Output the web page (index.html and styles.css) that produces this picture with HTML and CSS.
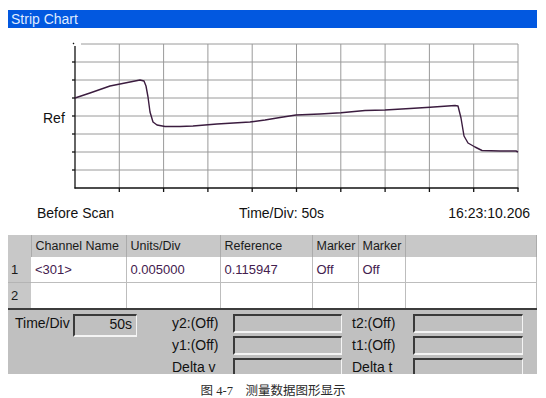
FILE: index.html
```html
<!DOCTYPE html>
<html lang="zh">
<head>
  <meta charset="UTF-8">
  <title>Strip Chart</title>
  <link rel="stylesheet" href="styles.css">
</head>
<body>
  <div class="page">
    <div class="titlebar">Strip Chart</div>

    <svg class="chart" width="529" height="172" viewBox="8 28 529 172">
      <g class="grid">
        <line x1="81" y1="44" x2="518" y2="44"/>
        <line x1="75" y1="62" x2="518" y2="62"/>
        <line x1="75" y1="80" x2="518" y2="80"/>
        <line x1="75" y1="98" x2="518" y2="98"/>
        <line x1="75" y1="116" x2="518" y2="116"/>
        <line x1="75" y1="134" x2="518" y2="134"/>
        <line x1="75" y1="152" x2="518" y2="152"/>
        <line x1="75" y1="170" x2="518" y2="170"/>
        <line x1="119.3" y1="44" x2="119.3" y2="188"/>
        <line x1="163.6" y1="44" x2="163.6" y2="188"/>
        <line x1="207.9" y1="44" x2="207.9" y2="188"/>
        <line x1="252.2" y1="44" x2="252.2" y2="188"/>
        <line x1="296.5" y1="44" x2="296.5" y2="188"/>
        <line x1="340.8" y1="44" x2="340.8" y2="188"/>
        <line x1="385.1" y1="44" x2="385.1" y2="188"/>
        <line x1="429.4" y1="44" x2="429.4" y2="188"/>
        <line x1="473.7" y1="44" x2="473.7" y2="188"/>
        <line x1="518" y1="44" x2="518" y2="188"/>
      </g>
      <g class="axis">
        <line x1="75" y1="46" x2="75" y2="188.5"/>
        <line x1="74.5" y1="188" x2="518.5" y2="188"/>
        <line x1="72" y1="62" x2="75" y2="62"/>
        <line x1="72" y1="80" x2="75" y2="80"/>
        <line x1="72" y1="98" x2="75" y2="98"/>
        <line x1="72" y1="116" x2="75" y2="116"/>
        <line x1="72" y1="134" x2="75" y2="134"/>
        <line x1="72" y1="152" x2="75" y2="152"/>
        <line x1="72" y1="170" x2="75" y2="170"/>
        <line x1="73" y1="43" x2="74" y2="44"/>
        <line x1="119.3" y1="188" x2="119.3" y2="192"/>
        <line x1="163.6" y1="188" x2="163.6" y2="192"/>
        <line x1="207.9" y1="188" x2="207.9" y2="192"/>
        <line x1="252.2" y1="188" x2="252.2" y2="192"/>
        <line x1="296.5" y1="188" x2="296.5" y2="192"/>
        <line x1="340.8" y1="188" x2="340.8" y2="192"/>
        <line x1="385.1" y1="188" x2="385.1" y2="192"/>
        <line x1="429.4" y1="188" x2="429.4" y2="192"/>
        <line x1="473.7" y1="188" x2="473.7" y2="192"/>
        <line x1="518" y1="188" x2="518" y2="192"/>
      </g>
      <text class="ref" x="43" y="123">Ref</text>
      <path class="trace" d="M75,98 L90,93 L110,86 L120,84 L130,82 L140,80 L144,81 L146,86 L148,97 L150,112 L153,122 L157,125 L165,126.5 L180,126.5 L193,126 L217,124 L250,122 L265,120 L280,117.5 L296,115 L320,114 L341,112.7 L365,110.5 L385,110 L410,108.5 L430,107.3 L455,105.5 L458,106 L461,118 L464,136 L468,143 L475,147 L482,150.5 L500,151 L516,151 L518,152"/>
    </svg>

    <div class="status">
      <span>Before Scan</span>
      <span>Time/Div: 50s</span>
      <span class="clock">16:23:10.206</span>
    </div>

    <table class="channels">
      <colgroup>
        <col class="c-num"><col class="c-name"><col class="c-units"><col class="c-ref"><col class="c-mark"><col class="c-mark2"><col>
      </colgroup>
      <thead>
        <tr>
          <th></th><th>Channel Name</th><th>Units/Div</th><th>Reference</th><th>Marker</th><th>Marker</th><th></th>
        </tr>
      </thead>
      <tbody>
        <tr>
          <th>1</th><td>&lt;301&gt;</td><td>0.005000</td><td>0.115947</td><td>Off</td><td>Off</td><td></td>
        </tr>
        <tr>
          <th>2</th><td></td><td></td><td></td><td></td><td></td><td></td>
        </tr>
      </tbody>
    </table>

    <div class="panel">
      <div class="timediv">
        <span class="lbl">Time/Div</span>
        <span class="box num">50s</span>
      </div>
      <div class="cursors">
        <span class="lbl">y2:(Off)</span><span class="box"></span>
        <span class="lbl">y1:(Off)</span><span class="box"></span>
        <span class="lbl">Delta v</span><span class="box"></span>
      </div>
      <div class="cursors right">
        <span class="lbl">t2:(Off)</span><span class="box"></span>
        <span class="lbl">t1:(Off)</span><span class="box"></span>
        <span class="lbl">Delta t</span><span class="box"></span>
      </div>
    </div>
  </div>

  <p class="caption">图 4-7　测量数据图形显示</p>
</body>
</html>
```

FILE: styles.css
```css
body {
  margin: 0;
  width: 546px;
  background: #fff;
  font-family: "Liberation Sans", Arial, sans-serif;
  color: #111;
}
.page {
  padding: 10px 9px 0 8px;
}
.titlebar {
  height: 18px;
  line-height: 18px;
  padding-left: 3px;
  background: #0258e0;
  color: #dfeaff;
  font-size: 14px;
}
.chart {
  display: block;
}
.grid line {
  stroke: #9a9a9a;
  stroke-width: 1;
}
.axis line {
  stroke: #111;
  stroke-width: 1.3;
}
.ref {
  font-family: "Liberation Sans", Arial, sans-serif;
  font-size: 14px;
  fill: #111;
}
.trace {
  fill: none;
  stroke: #3b1c3f;
  stroke-width: 1.4;
  stroke-linejoin: round;
}
.status {
  display: grid;
  grid-template-columns: 202px 1fr auto;
  height: 25px;
  align-items: center;
  padding: 0 7px 0 29px;
  font-size: 14px;
}
.status .clock {
  text-align: right;
}
.channels {
  margin-top: 10px;
  width: 529px;
  border-collapse: collapse;
  table-layout: fixed;
  font-size: 12.5px;
  border-bottom: 2px solid #3c3c3c;
}
.c-num { width: 23px; }
.c-name { width: 95px; }
.c-units { width: 94px; }
.c-ref { width: 92px; }
.c-mark { width: 46px; }
.c-mark2 { width: 47px; }
.channels th,
.channels td {
  padding: 0 0 0 4px;
  text-align: left;
  white-space: nowrap;
  overflow: hidden;
}
.channels thead th {
  height: 22px;
  background: #c8c8c8;
  font-weight: normal;
  color: #1a1a1a;
  border-right: 1px solid #ababab;
}
.channels tbody th {
  height: 25px;
  background: #c8c8c8;
  font-weight: normal;
  color: #1a1a1a;
  padding-left: 3px;
  font-size: 13px;
  border-bottom: 1px solid #b4b4b4;
}
.channels td {
  color: #43204e;
  font-size: 13px;
  border-right: 1px solid #bdbdbd;
  border-bottom: 1px solid #bdbdbd;
}
.channels tbody tr:last-child td,
.channels tbody tr:last-child th {
  border-bottom: none;
}
.panel {
  display: flex;
  height: 60px;
  padding: 4px 0 0 7px;
  background: #c0c0c0;
  overflow: hidden;
  font-size: 14px;
}
.timediv {
  display: flex;
  align-items: flex-start;
  width: 157px;
}
.timediv .lbl {
  width: 58px;
  line-height: 19px;
}
.box {
  box-sizing: border-box;
  height: 19px;
  background: #c0c0c0;
  border-top: 2px solid #3a3a3a;
  border-left: 2px solid #3a3a3a;
  border-right: 1px solid #f4f4f4;
  border-bottom: 2px solid #f4f4f4;
}
.box.num {
  width: 64px;
  height: 23px;
  text-align: right;
  padding-right: 4px;
  line-height: 17px;
}
.cursors {
  display: grid;
  grid-template-columns: 61px 109px;
  grid-auto-rows: 22px;
  align-items: start;
}
.cursors.right {
  margin-left: 10px;
  grid-template-columns: 61px 110px;
}
.cursors .lbl {
  line-height: 19px;
}
.caption {
  margin: 10px 0 0;
  line-height: 15px;
  text-align: center;
  font-family: "Liberation Serif", "Noto Sans CJK SC", serif;
  font-size: 12.5px;
  color: #2a2a2a;
}
```
